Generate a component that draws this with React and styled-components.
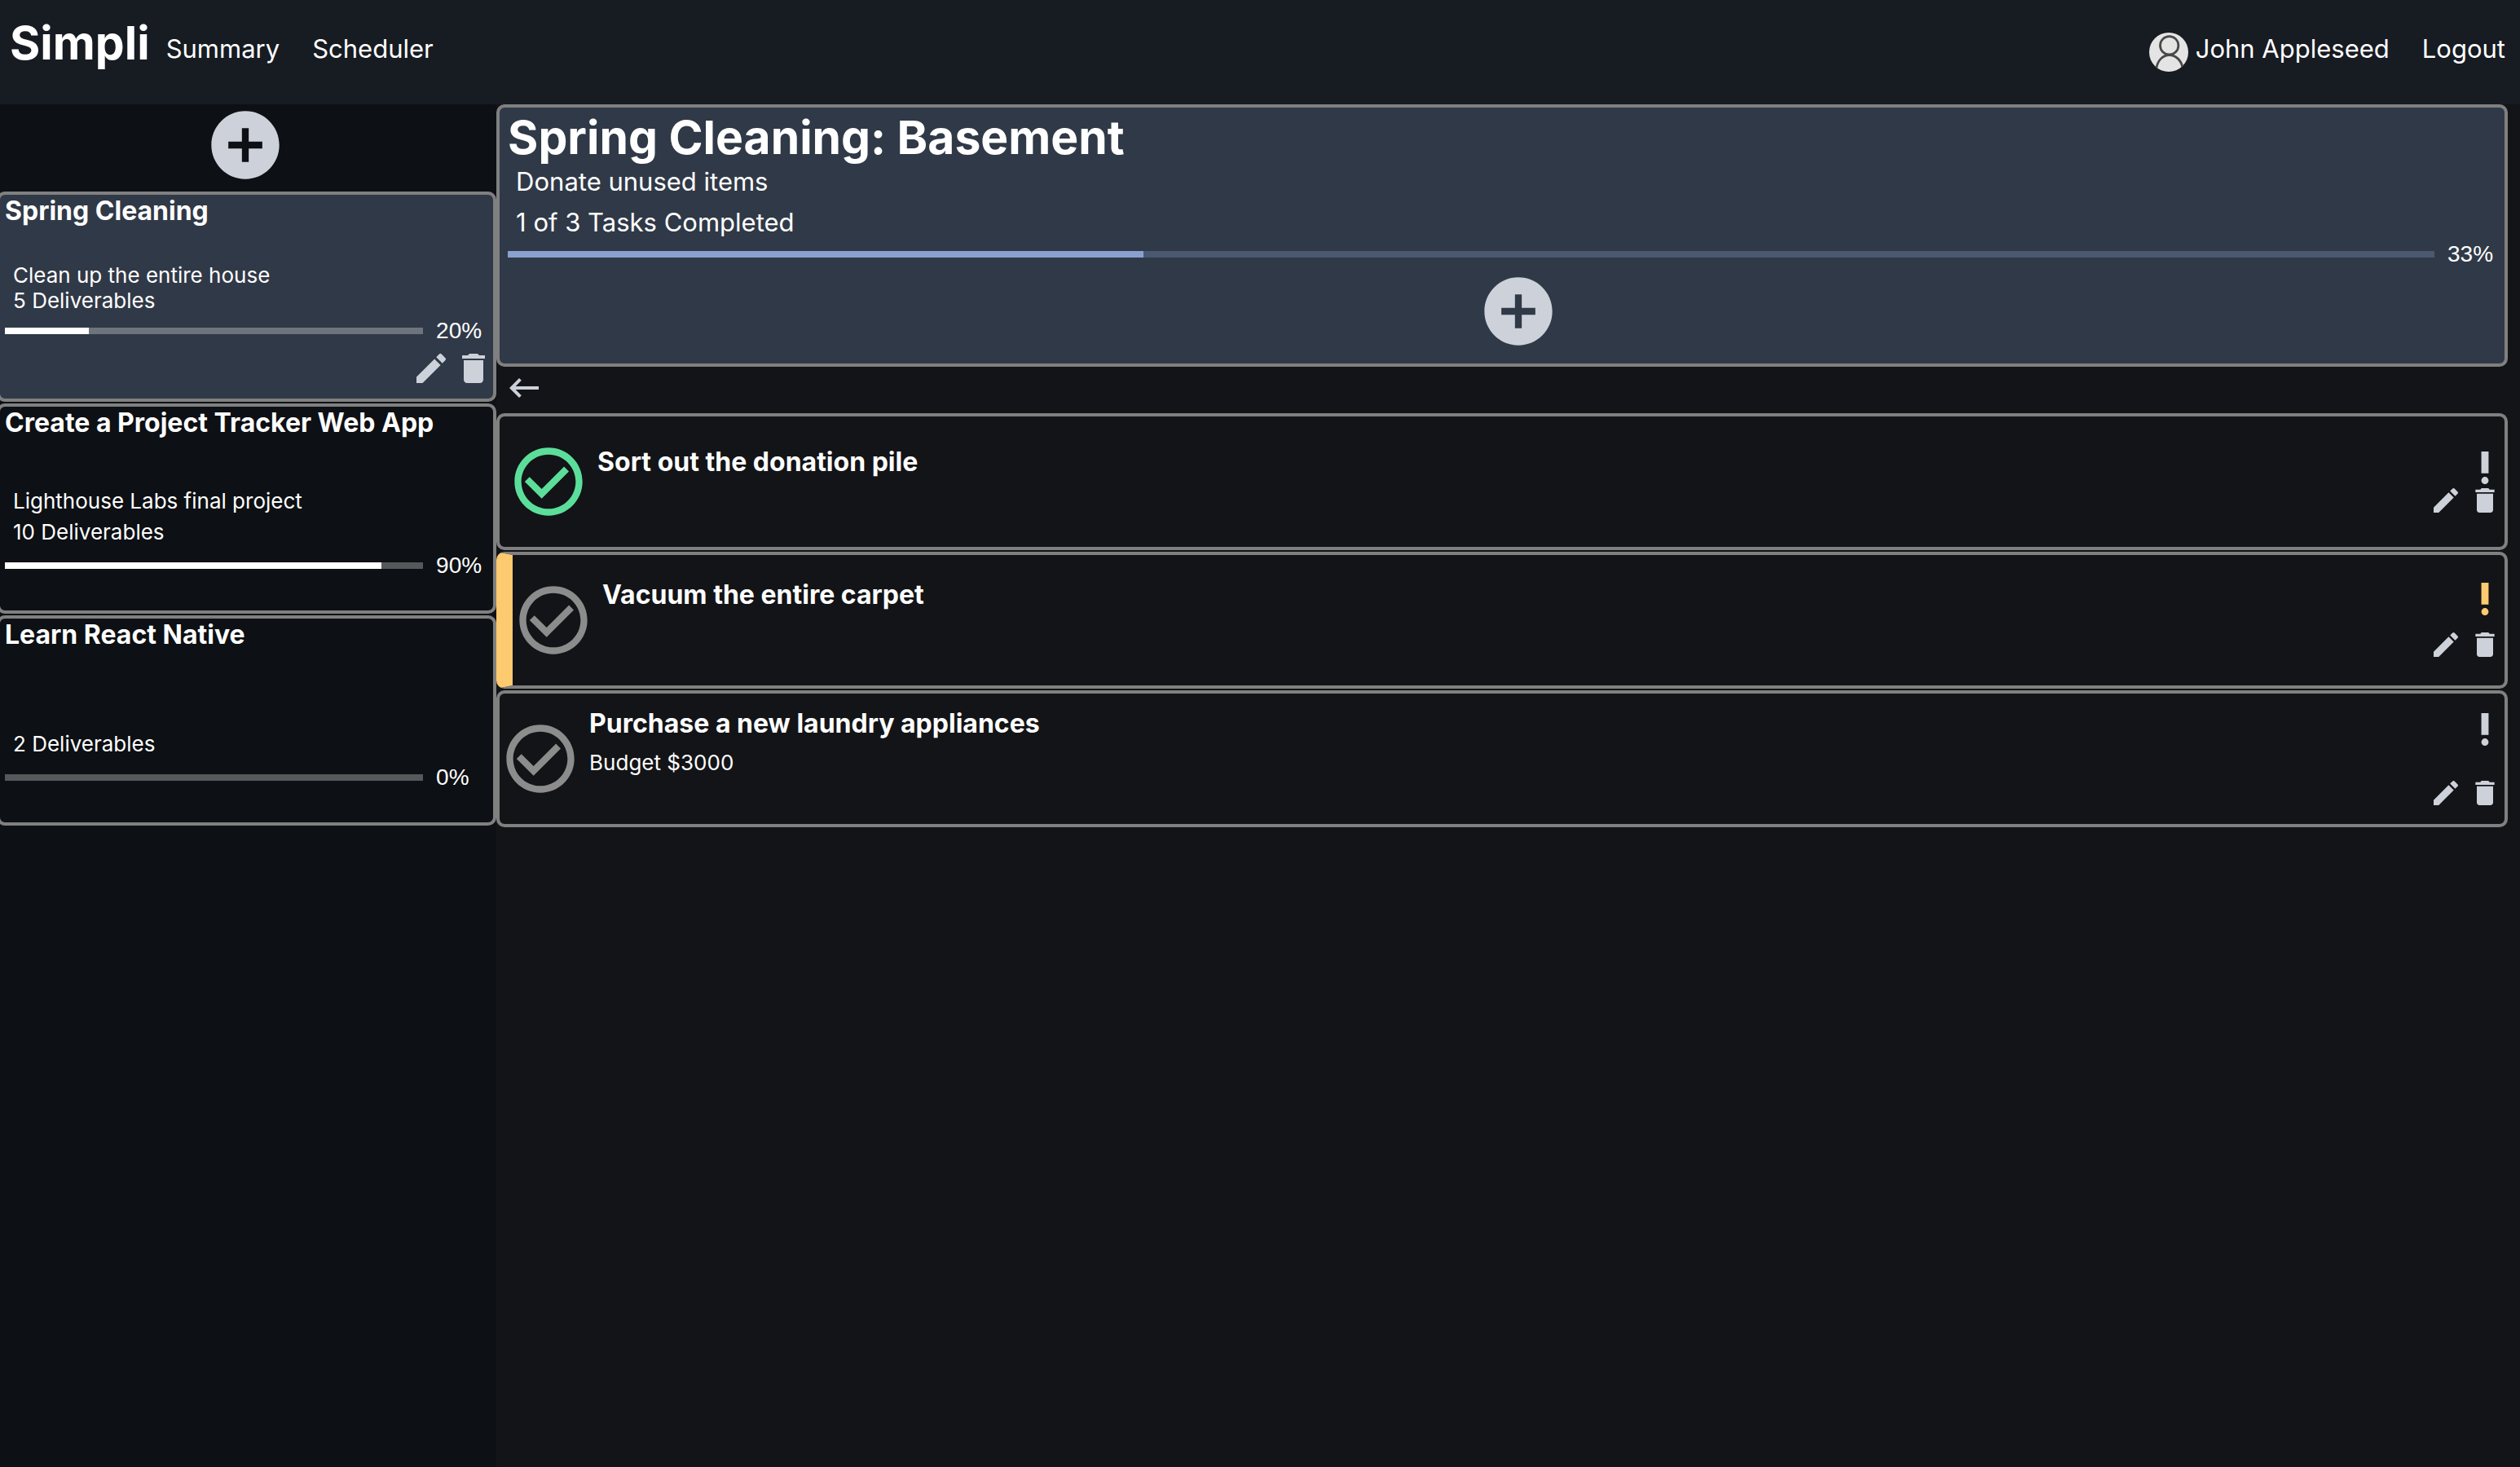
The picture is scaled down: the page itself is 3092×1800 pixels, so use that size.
import React from 'react';
import styled, { createGlobalStyle, css } from 'styled-components';

const colors = {
  header: '#171b22',
  sidebar: '#0d1014',
  main: '#131417',
  selected: '#303947',
  border: '#808080',
  icon: '#cdd1d9',
  amber: '#fdca70',
  green: '#5cde9b',
  idle: '#8c8c8c',
  accent: '#8aa1d0',
};

const GlobalStyle = createGlobalStyle`
  *, *::before, *::after { box-sizing: border-box; }
  body {
    margin: 0;
    background: ${colors.main};
    color: #fff;
    font-family: Inter, "Noto Sans", sans-serif;
  }
  h1, h2, h3, p { margin: 0; }
`;

const paths = {
  add: 'M12 2C6.48 2 2 6.48 2 12s4.48 10 10 10 10-4.48 10-10S17.52 2 12 2zm5 11h-4v4h-2v-4H7v-2h4V7h2v4h4v2z',
  edit: 'M3 17.25V21h3.75L17.81 9.94l-3.75-3.75L3 17.25zM20.71 7.04c.39-.39.39-1.02 0-1.41l-2.34-2.34a.9959.9959 0 0 0-1.41 0l-1.83 1.83 3.75 3.75 1.83-1.83z',
  trash: 'M6 19c0 1.1.9 2 2 2h8c1.1 0 2-.9 2-2V7H6v12zM19 4h-3.5l-1-1h-5l-1 1H5v2h14V4z',
  back: 'M21 11H6.83l3.58-3.59L9 6l-6 6 6 6 1.41-1.41L6.83 13H21z',
  check:
    'M16.59 7.58 10 14.17l-3.59-3.58L5 12l5 5 8-8zM12 2C6.48 2 2 6.48 2 12s4.48 10 10 10 10-4.48 10-10S17.52 2 12 2zm0 18c-4.42 0-8-3.58-8-8s3.58-8 8-8 8 3.58 8 8-3.58 8-8 8z',
  flag: 'M10 3h4v12h-4zM14 19a2 2 0 1 1-4 0 2 2 0 0 1 4 0z',
};

const Svg = styled.svg`
  display: block;
  width: ${(p) => p.$size}px;
  height: ${(p) => p.$size}px;
  fill: currentColor;
`;

const Icon = ({ name, size, viewBox = '0 0 24 24' }) => (
  <Svg $size={size} viewBox={viewBox} aria-hidden="true">
    <path d={paths[name]} />
  </Svg>
);

const IconButton = styled.button`
  display: flex;
  flex: none;
  padding: 0;
  border: 0;
  background: none;
  color: ${(p) => p.$color || colors.icon};
  cursor: pointer;
`;

/* Header */
const Header = styled.header`
  display: flex;
  align-items: flex-start;
  height: 128px;
  padding: 21px 18px 0 12px;
  background: ${colors.header};
  line-height: 64px;
`;

const Brand = styled.a`
  margin-right: 20px;
  color: inherit;
  font-size: 57px;
  font-weight: 700;
  text-decoration: none;
`;

const Nav = styled.nav`
  display: flex;
  gap: 40px;
  margin-top: 7px;
  font-size: 31px;
`;

const AccountNav = styled(Nav)`
  margin-left: auto;
`;

const NavLink = styled.a`
  display: flex;
  align-items: center;
  gap: 9px;
  color: inherit;
  text-decoration: none;
`;

const Avatar = styled.svg`
  width: 48px;
  height: 48px;
  margin-top: 8px;
`;

/* Page */
const Page = styled.div`
  display: flex;
  flex-direction: column;
  min-height: 100vh;
`;

const Body = styled.div`
  display: grid;
  flex: 1;
  grid-template-columns: minmax(0, 197fr) minmax(0, 803fr);
`;

const Sidebar = styled.aside`
  display: flex;
  flex-direction: column;
  background: ${colors.sidebar};
`;

const AddRow = styled.div`
  display: flex;
  justify-content: center;
  padding: ${(p) => p.$padding};
`;

const Panel = css`
  border: 4px solid ${colors.border};
  border-radius: 10px;
`;

const CardList = styled.ul`
  display: flex;
  flex-direction: column;
  gap: 2px;
  margin: 0;
  padding: 0;
  list-style: none;
`;

const ProjectCard = styled.li`
  ${Panel}
  display: flex;
  flex-direction: column;
  min-height: 258px;
  margin-left: -4px;
  padding: 0 0 ${(p) => (p.$selected ? 13 : 41)}px 6px;
  background: ${(p) => (p.$selected ? colors.selected : 'transparent')};
`;

const ItemTitle = styled.h2`
  font-size: 32px;
  font-weight: 700;
  line-height: 40px;
`;

const ProjectText = styled.div`
  margin-top: auto;
  padding-left: 10px;
  font-size: 26px;
  line-height: ${(p) => (p.$tight ? 31 : 38)}px;
`;

const MeterRow = styled.div`
  display: flex;
  align-items: center;
  gap: 16px;
  margin-top: ${(p) => p.$top}px;
`;

const Meter = styled.progress`
  flex: 1;
  min-width: 0;
  height: 8px;
  border: 0;
  appearance: none;
  background: ${(p) => (p.$accent ? '#4a5870' : 'rgba(255, 255, 255, 0.3)')};

  &::-webkit-progress-bar { background: transparent; }
  &::-webkit-progress-value { background: ${(p) => (p.$accent ? colors.accent : '#fff')}; }
`;

const Percent = styled.span`
  width: 70px;
  font-family: "Liberation Sans", sans-serif;
  font-size: 28px;
  line-height: 28px;
`;

const Actions = styled.div`
  display: flex;
  justify-content: flex-end;
  gap: ${(p) => p.$gap}px;
`;

const CardActions = styled(Actions)`
  margin-top: 8px;
`;

/* Main column */
const Main = styled.main`
  padding-right: 15px;
`;

const Summary = styled.section`
  ${Panel}
  padding: 5px 0 14px 10px;
  background: ${colors.selected};
`;

const Title = styled.h1`
  font-size: 57px;
  font-weight: 700;
  line-height: 64px;
`;

const SummaryText = styled.p`
  padding-left: 10px;
  font-size: 31px;
  line-height: 44px;

  & + & { margin-top: 6px; }
`;

const BackRow = styled.div`
  padding: 2px 10px 7px;
`;

const TaskCard = styled.li`
  ${Panel}
  display: flex;
  align-items: center;
  min-height: 168px;
  padding: 0 4px 0 ${(p) => p.$inset}px;
  ${(p) => p.$flagged && css`border-left: 20px solid ${colors.amber};`}
`;

const TaskText = styled.div`
  flex: 1;
  align-self: stretch;
  padding: ${(p) => p.$top}px 10px 0;
`;

const TaskNote = styled.p`
  margin-top: 8px;
  font-size: 26px;
  line-height: 40px;
`;

const TaskSide = styled.div`
  display: flex;
  flex-direction: column;
  align-items: flex-end;
  justify-content: space-between;
  align-self: stretch;
  padding: ${(p) => p.$top}px 0 ${(p) => p.$bottom}px;
`;

const projects = [
  { title: 'Spring Cleaning', about: 'Clean up the entire house', count: 5, percent: 20, selected: true },
  { title: 'Create a Project Tracker Web App', about: 'Lighthouse Labs final project', count: 10, percent: 90 },
  { title: 'Learn React Native', about: '', count: 2, percent: 0 },
];

const tasks = [
  { title: 'Sort out the donation pile', done: true, inset: 10, textTop: 36, sideTop: 43, sideBottom: 37 },
  { title: 'Vacuum the entire carpet', flagged: true, inset: 0, textTop: 29, sideTop: 34, sideBottom: 30 },
  { title: 'Purchase a new laundry appliances', note: 'Budget $3000', inset: 0, textTop: 17, sideTop: 24, sideBottom: 18 },
];

const EditDelete = ({ of, size }) => (
  <>
    <IconButton type="button" aria-label={`Edit ${of}`}><Icon name="edit" size={size} /></IconButton>
    <IconButton type="button" aria-label={`Delete ${of}`}><Icon name="trash" size={size} /></IconButton>
  </>
);

const Progress = ({ label, percent, accent, top }) => (
  <MeterRow $top={top}>
    <Meter aria-label={label} value={percent} max={100} $accent={accent} />
    <Percent>{percent}%</Percent>
  </MeterRow>
);

const Project = ({ title, about, count, percent, selected }) => (
  <ProjectCard $selected={selected}>
    <ItemTitle>{title}</ItemTitle>
    <ProjectText $tight={selected}>
      {about && <p>{about}</p>}
      <p>{count} Deliverables</p>
    </ProjectText>
    <Progress label={title} percent={percent} top={8} />
    {selected && <CardActions $gap={4}><EditDelete of={title} size={48} /></CardActions>}
  </ProjectCard>
);

const Task = ({ title, note, done, flagged, inset, textTop, sideTop, sideBottom }) => (
  <TaskCard $inset={inset} $flagged={flagged}>
    <IconButton type="button" aria-label={`Complete ${title}`} aria-pressed={!!done} $color={done ? colors.green : colors.idle}>
      <Icon name="check" size={100} />
    </IconButton>
    <TaskText $top={textTop}>
      <ItemTitle>{title}</ItemTitle>
      {note && <TaskNote>{note}</TaskNote>}
    </TaskText>
    <TaskSide $top={sideTop} $bottom={sideBottom}>
      <IconButton type="button" aria-label={`Prioritize ${title}`} $color={flagged ? colors.amber : colors.icon}>
        <Icon name="flag" size={40} viewBox="3 3 18 18" />
      </IconButton>
      <Actions $gap={8}><EditDelete of={title} size={40} /></Actions>
    </TaskSide>
  </TaskCard>
);

export default function App() {
  return (
    <Page>
      <GlobalStyle />
      <Header>
        <Brand href="#">Simpli</Brand>
        <Nav>
          <NavLink href="#summary">Summary</NavLink>
          <NavLink href="#scheduler">Scheduler</NavLink>
        </Nav>
        <AccountNav>
          <NavLink href="#profile">
            <Avatar viewBox="0 0 48 48" aria-hidden="true">
              <clipPath id="avatar-clip"><circle cx="24" cy="24" r="24" /></clipPath>
              <circle cx="24" cy="24" r="24" fill="#e4e4e4" />
              <g clipPath="url(#avatar-clip)" fill="none" stroke="#484848" strokeWidth="2.8">
                <circle cx="24.7" cy="15.8" r="11.2" />
                <path d="M9 43c1.500-9 8-15.500 15.700-15.500S39.500 34 41 43" />
              </g>
            </Avatar>
            John Appleseed
          </NavLink>
          <NavLink href="#logout">Logout</NavLink>
        </AccountNav>
      </Header>
      <Body>
        <Sidebar>
          <AddRow $padding="0 8px 7px 0">
            <IconButton type="button" aria-label="Add project"><Icon name="add" size={100} /></IconButton>
          </AddRow>
          <CardList>
            {projects.map((project) => <Project key={project.title} {...project} />)}
          </CardList>
        </Sidebar>
        <Main>
          <Summary>
            <Title>Spring Cleaning: Basement</Title>
            <SummaryText>Donate unused items</SummaryText>
            <SummaryText>1 of 3 Tasks Completed</SummaryText>
            <Progress label="Tasks completed" percent={33} accent top={3} />
            <AddRow $padding="6px 0 0 30px">
              <IconButton type="button" aria-label="Add task"><Icon name="add" size={100} /></IconButton>
            </AddRow>
          </Summary>
          <BackRow>
            <IconButton type="button" aria-label="Back"><Icon name="back" size={48} /></IconButton>
          </BackRow>
          <CardList>
            {tasks.map((task) => <Task key={task.title} {...task} />)}
          </CardList>
        </Main>
      </Body>
    </Page>
  );
}
